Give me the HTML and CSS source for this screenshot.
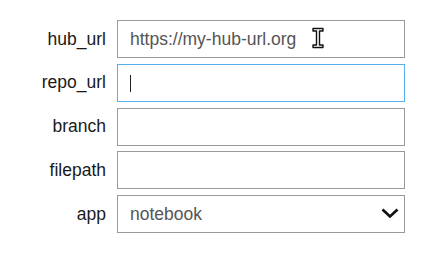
FILE: index.html
```html
<!DOCTYPE html>
<html lang="en">
<head>
    <meta charset="UTF-8">
    <meta name="viewport" content="width=device-width, initial-scale=1.0">
    <title>Launch settings</title>
    <link rel="stylesheet" href="styles.css">
</head>
<body>
    <form class="launch-form">
        <label class="field-label" for="hub_url">hub_url</label>
        <div class="field">
            <input class="field-input" type="text" id="hub_url" value="https://my-hub-url.org">
            <!-- mouse pointer sitting over the first field -->
            <svg class="ibeam" width="12" height="22" viewBox="0 0 12 22">
                <path d="M1 1.5h10v2.5h-3.5v14h3.5v2.5h-10v-2.5h3.5v-14h-3.5z" fill="#fff" stroke="#111" stroke-width="1.4" stroke-linejoin="round"/>
            </svg>
        </div>

        <label class="field-label" for="repo_url">repo_url</label>
        <div class="field">
            <input class="field-input is-focused" type="text" id="repo_url">
            <span class="caret"></span>
        </div>

        <label class="field-label" for="branch">branch</label>
        <div class="field">
            <input class="field-input" type="text" id="branch">
        </div>

        <label class="field-label" for="filepath">filepath</label>
        <div class="field">
            <input class="field-input" type="text" id="filepath">
        </div>

        <label class="field-label" for="app">app</label>
        <div class="field">
            <select class="field-input field-select" id="app">
                <option value="notebook">notebook</option>
                <option value="lab">lab</option>
                <option value="rstudio">rstudio</option>
            </select>
            <svg class="chevron" width="18" height="10" viewBox="0 0 18 10">
                <polyline points="1.5,1.5 9,8.5 16.5,1.5" fill="none" stroke="#111" stroke-width="2.6"/>
            </svg>
        </div>
    </form>
</body>
</html>
```

FILE: styles.css
```css
body {
    font-family: "Liberation Sans", Arial, sans-serif;
    background-color: #fff;
    margin: 0;
}
.launch-form {
    display: grid;
    grid-template-columns: 106px 288px;
    column-gap: 11px;
    row-gap: 5.75px;
    align-items: center;
    padding-top: 20px;
}
.field-label {
    text-align: right;
    font-size: 17.5px;
    color: #1a1a1a;
}
.field {
    position: relative;
    height: 38px;
}
.field-input {
    box-sizing: border-box;
    width: 100%;
    height: 38px;
    margin: 0;
    padding: 0 12px;
    border: 1.4px solid #9a9a9a;
    border-radius: 0;
    background-color: #fff;
    font-family: "Liberation Sans", Arial, sans-serif;
    font-size: 17.5px;
    color: #555;
    outline: none;
}
.field-input.is-focused {
    border-color: #56b0ec;
}
.field-select {
    appearance: none;
    -webkit-appearance: none;
}
.caret {
    position: absolute;
    left: 13px;
    top: 11px;
    width: 1.3px;
    height: 17px;
    background-color: #222;
}
.ibeam {
    position: absolute;
    left: 195px;
    top: 7px;
}
.chevron {
    position: absolute;
    right: 6px;
    top: 13px;
    pointer-events: none;
}
```
